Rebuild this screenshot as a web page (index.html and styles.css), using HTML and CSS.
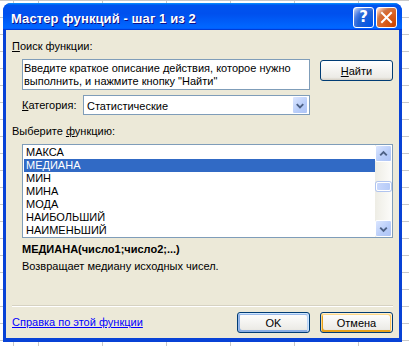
FILE: index.html
```html
<!DOCTYPE html>
<html lang="ru">
<head>
  <meta charset="UTF-8" />
  <title>Мастер функций - шаг 1 из 2</title>
  <link rel="stylesheet" href="styles.css">
</head>
<body>
  <div class="window">
    <div class="title-bar">
      <span class="title">Мастер функций - шаг 1 из 2</span>
      <div class="title-controls">
        <span class="tb-btn help">?</span>
        <span class="tb-btn close">
          <svg width="19" height="19" viewBox="0 0 19 19">
            <path d="M5 5 L14 14 M14 5 L5 14" stroke="#fff" stroke-width="2" stroke-linecap="square"/>
          </svg>
        </span>
      </div>
    </div>

    <div class="client">
      <div class="label"><u>П</u>оиск функции:</div>

      <div class="search-row">
        <div class="textbox">Введите краткое описание действия, которое нужно<br>выполнить, и нажмите кнопку "Найти"</div>
        <button class="btn find"><u>Н</u>айти</button>
      </div>

      <div class="category-row">
        <span class="category-label"><u>К</u>атегория:</span>
        <div class="combo">
          <span class="combo-text">Статистические</span>
          <span class="arrow-btn combo-btn">
            <svg width="15" height="17" viewBox="0 0 15 17">
              <polyline points="4,7 7.5,10.5 11,7" fill="none" stroke="#4d6185" stroke-width="2"/>
            </svg>
          </span>
        </div>
      </div>

      <div class="label list-label">Выберите <u>ф</u>ункцию:</div>

      <div class="listbox">
        <ul class="items">
          <li>МАКСА</li>
          <li class="selected">МЕДИАНА</li>
          <li>МИН</li>
          <li>МИНА</li>
          <li>МОДА</li>
          <li>НАИБОЛЬШИЙ</li>
          <li>НАИМЕНЬШИЙ</li>
        </ul>
        <div class="scrollbar">
          <span class="arrow-btn scroll-btn">
            <svg width="16" height="16" viewBox="0 0 16 16">
              <polyline points="4.5,9.5 8,6 11.5,9.5" fill="none" stroke="#4d6185" stroke-width="2"/>
            </svg>
          </span>
          <div class="track">
            <span class="thumb"></span>
          </div>
          <span class="arrow-btn scroll-btn">
            <svg width="16" height="16" viewBox="0 0 16 16">
              <polyline points="4.5,6.5 8,10 11.5,6.5" fill="none" stroke="#4d6185" stroke-width="2"/>
            </svg>
          </span>
        </div>
      </div>

      <div class="fn-sig">МЕДИАНА(число1;число2;...)</div>
      <div class="fn-desc">Возвращает медиану исходных чисел.</div>

      <div class="separator"></div>

      <div class="footer">
        <a class="help-link" href="#">Справка по этой функции</a>
        <div class="footer-buttons">
          <button class="btn default">OK</button>
          <button class="btn hot">Отмена</button>
        </div>
      </div>
    </div>
  </div>
</body>
</html>
```

FILE: styles.css
```css
body {
  margin: 0;
  width: 409px;
  height: 346px;
  overflow: hidden;
  background-color: #fff;
  background-image:
    repeating-linear-gradient(90deg, #c9c9c9 0 1px, transparent 1px 64px),
    repeating-linear-gradient(180deg, #c9c9c9 0 1px, transparent 1px 17px);
  background-position: 38px 0, 0 0;
  font-family: "Liberation Sans", Arial, sans-serif;
  font-size: 11px;
  color: #000;
}
.window {
  margin: 3px 0 0 3px;
  width: 399px;
  border-radius: 8px 8px 0 0;
  background: #0842d6;
  overflow: hidden;
}
.title-bar {
  height: 27px;
  display: flex;
  align-items: center;
  justify-content: space-between;
  padding: 0 5px 0 8px;
  background: linear-gradient(180deg, #0997ff, #0053ee 8%, #0050ee 40%, #06f 88%, #06f 93%, #005bff 95%, #003dd7 96%, #003dd7);
}
.title {
  color: #fff;
  font-weight: bold;
  font-size: 13px;
  padding-top: 4px;
  letter-spacing: 0.1px;
  text-shadow: 1px 1px #0f1089;
}
.title-controls {
  display: flex;
  gap: 2px;
  padding-top: 1px;
}
.tb-btn {
  width: 21px;
  height: 21px;
  box-sizing: border-box;
  border: 1px solid #fff;
  border-radius: 3px;
  display: flex;
  align-items: center;
  justify-content: center;
}
.help {
  background: radial-gradient(circle at 90% 90%, #0054e9 0, #2263d5 55%, #4479e4 70%, #a3bbec 90%, #fff 100%);
  color: #fff;
  font-weight: bold;
  font-size: 15px;
  font-family: "DejaVu Sans", sans-serif;
}
.close {
  background: radial-gradient(circle at 90% 90%, #cc4600 0, #dc6527 55%, #cd7546 70%, #ffccb2 90%, #fff 100%);
}
.client {
  margin: 0 3px 4px 3px;
  background: #ece9d8;
  padding: 10px 6px 5px 6px;
  display: flex;
  flex-direction: column;
}
.label {
  line-height: 13px;
  height: 13px;
}
.search-row {
  display: flex;
  align-items: flex-start;
  margin: 6px 0 0 10px;
  gap: 10px;
}
.textbox {
  width: 288px;
  height: 31px;
  box-sizing: border-box;
  border: 1px solid #7f9db9;
  background: #fff;
  padding: 2px 1px;
  line-height: 13px;
  white-space: nowrap;
}
.btn {
  font: inherit;
  color: #000;
  width: 73px;
  height: 21px;
  padding: 0;
  border: 1px solid #003c74;
  border-radius: 3px;
  background: linear-gradient(180deg, #fff, #ecebe6 86%, #d6d0c5);
}
.find {
  margin-top: 1px;
}
.default {
  box-shadow: inset -1px 1px #cee7ff, inset 1px 2px #98b8ea, inset -2px 2px #bcd4f6, inset 1px -1px #89ade4, inset 2px -2px #89ade4;
}
.hot {
  box-shadow: inset -1px 1px #fff0cf, inset 1px 2px #fdd889, inset -2px 2px #fbc761, inset 2px -2px #e5a01a;
}
.category-row {
  display: flex;
  align-items: center;
  margin: 5px 0 0 10px;
  height: 20px;
}
.category-label {
  width: 61px;
}
.combo {
  width: 227px;
  height: 20px;
  box-sizing: border-box;
  border: 1px solid #7f9db9;
  background: #fff;
  display: flex;
  align-items: center;
  justify-content: space-between;
  padding: 0 1px 0 3px;
}
.combo-text {
  padding-top: 1px;
}
.arrow-btn {
  display: flex;
  align-items: center;
  justify-content: center;
  box-sizing: border-box;
  border: 1px solid #fff;
  border-radius: 2px;
  background: linear-gradient(135deg, #dbe6ff, #b8cdf9 60%, #aec4f6);
}
.combo-btn {
  width: 16px;
  height: 18px;
}
.list-label {
  margin-top: 10px;
}
.listbox {
  margin: 6px 0 0 10px;
  width: 371px;
  height: 94px;
  box-sizing: border-box;
  border: 1px solid #7f9db9;
  background: #fff;
  display: flex;
  justify-content: space-between;
}
.items {
  list-style: none;
  margin: 1px 0 0 1px;
  padding: 0;
  width: 351px;
}
.items li {
  height: 13px;
  line-height: 13px;
  padding-left: 2px;
}
.items .selected {
  background: #316ac5;
  color: #fff;
}
.scrollbar {
  width: 17px;
  display: flex;
  flex-direction: column;
  background: linear-gradient(90deg, #eeede5, #fcfcfa);
}
.scroll-btn {
  width: 17px;
  height: 17px;
}
.track {
  flex: 1;
  padding-top: 20px;
  display: flex;
  justify-content: center;
}
.thumb {
  width: 15px;
  height: 9px;
  box-sizing: border-box;
  border: 1px solid #fff;
  border-radius: 2px;
  background: linear-gradient(90deg, #c9d8fc, #b6cbf8);
  box-shadow: 0 0 0 1px #b0c4ef;
}
.fn-sig {
  margin: 5px 0 0 10px;
  font-weight: bold;
  line-height: 13px;
}
.fn-desc {
  margin: 4px 0 0 10px;
  line-height: 13px;
}
.separator {
  margin-top: 32px;
  height: 1px;
  border-top: 1px solid #d6d2c2;
  background: #fff;
}
.footer {
  margin-top: 5px;
  display: flex;
  justify-content: space-between;
  align-items: center;
  height: 21px;
}
.help-link {
  color: #0000ff;
  text-decoration: underline;
  line-height: 13px;
}
.footer-buttons {
  display: flex;
  gap: 10px;
}
```
